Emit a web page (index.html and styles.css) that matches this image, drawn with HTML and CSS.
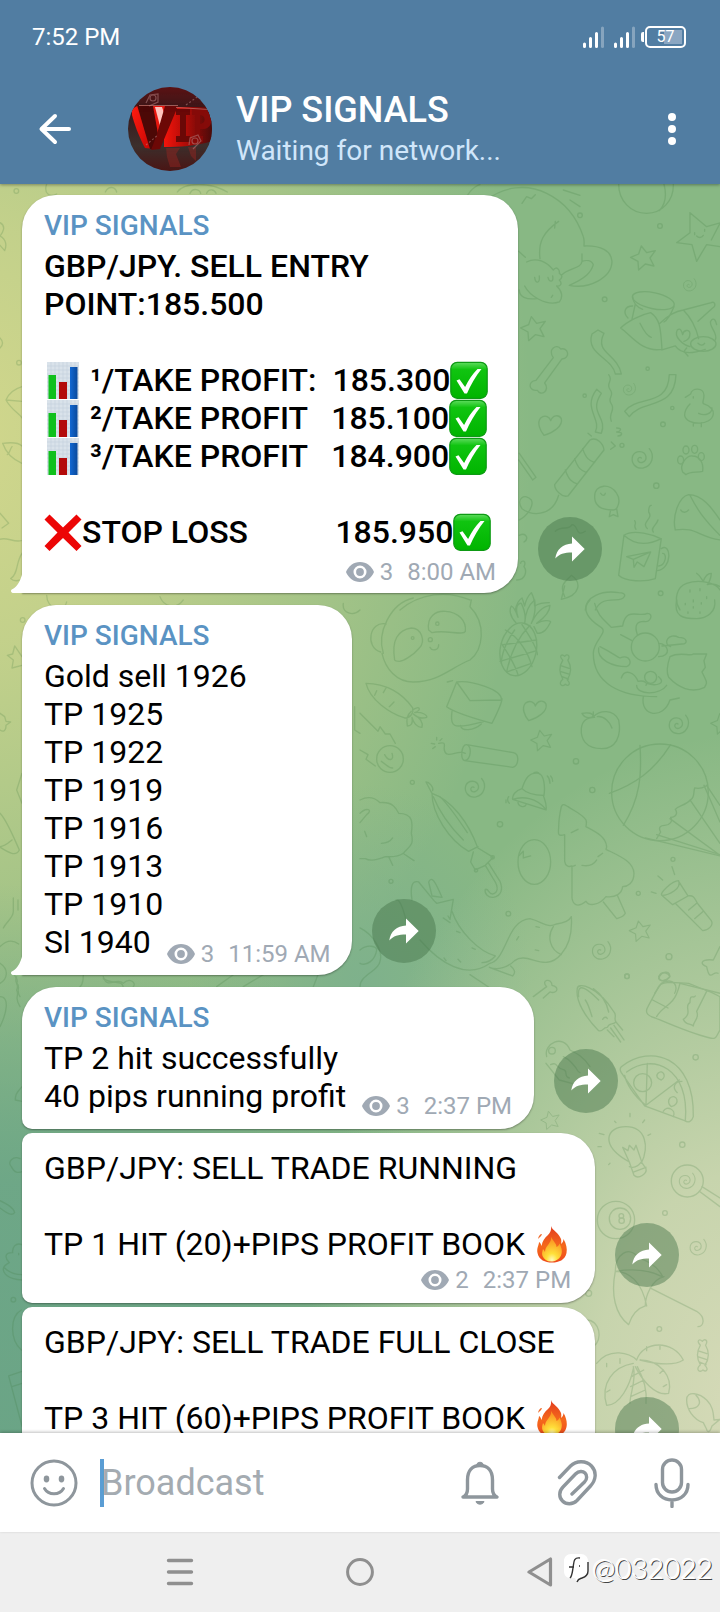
FILE: index.html
```html
<!DOCTYPE html>
<html lang="en">
<head>
<meta charset="utf-8">
<meta name="viewport" content="width=device-width, initial-scale=1">
<title>VIP SIGNALS</title>
<link rel="stylesheet" href="styles.css">
</head>
<body>
<svg class="defs" aria-hidden="true">
  <defs>
    <linearGradient id="g-check" x1="0" y1="0" x2="0" y2="1"><stop offset="0" stop-color="#5fdc5f"/><stop offset=".2" stop-color="#10c410"/><stop offset="1" stop-color="#00b400"/></linearGradient>
    <linearGradient id="g-fire" x1="0" y1="0" x2="0" y2="1"><stop offset="0" stop-color="#e23b1e"/><stop offset=".55" stop-color="#f5691c"/><stop offset="1" stop-color="#ee4a1c"/></linearGradient>
    <radialGradient id="g-flame" cx=".5" cy=".95" r=".8"><stop offset="0" stop-color="#fffbc0"/><stop offset=".35" stop-color="#ffe03a"/><stop offset="1" stop-color="#fb9a24"/></radialGradient>
    <linearGradient id="g-blue" x1="0" y1="0" x2="1" y2="0"><stop offset="0" stop-color="#1268d2"/><stop offset="1" stop-color="#0a4a9c"/></linearGradient>
    <symbol id="e-chart" viewBox="0 0 38 38">
      <path d="M3 1h32v37H3z" fill="#d9e2ea"/>
      <path d="M3 5h32M3 9h32M3 13h32M3 17h32M3 21h32M3 25h32M3 29h32M3 33h32M7 1v37M11 1v37M15 1v37M19 1v37M23 1v37M27 1v37M31 1v37" stroke="#c5d1dc" stroke-width=".6"/>
      <path d="M4.500 14h7.500v24H4.500z" fill="#0fc01c"/><path d="M15 21h8v17h-8z" fill="#b30a0a"/><path d="M26 6h7.500v32H26z" fill="url(#g-blue)"/>
    </symbol>
    <symbol id="e-check" viewBox="0 0 38 38">
      <rect x=".8" y="1.300" width="36.400" height="36" rx="6.500" fill="url(#g-check)" stroke="#0e9a14" stroke-width="1.200"/>
      <path d="M6.500 19.500l3-1.200 5.600 7.600C18.500 19 22.500 13 27.500 8h4C25.500 15.500 20.500 24 17 32.500h-2.500z" fill="#fff"/>
    </symbol>
    <symbol id="e-cross" viewBox="0 0 38 38"><path d="M5.500 1.500L19 14.500 32.500 1.500l5 5L24.500 19.500 37.500 33l-5 5L19 25 5.500 38l-5-5L13.500 19.500.5 6.500z" fill="#ec0606"/></symbol>
    <symbol id="e-fire" viewBox="0 0 38 38">
      <path d="M18 1c1 4 8 7 10 13 .5 2 .3 4 0 5 1.500-1 2.500-3 2.500-5 3 5 3.800 10 3 14C32 35 26 37.500 19 37.500S6 35 4.500 28C3.500 23 6 20 6 17c1.500 1 2 2.500 2.500 4 1-5 3-8 6.500-11 2.500-2.500 3.500-5 3-9z" fill="url(#g-fire)"/>
      <path d="M5 14c1.500-1.500 3.500-3 4-5-2 0-3.500 2-4 5z" fill="#ef6a2a"/>
      <path d="M18.500 12c1 4 5 6 5 10 2-1 2.500-2 3-3.500 2.500 5 3 8 1.500 12-2 4-6 6-10 6s-7-2-8.500-5.500c-1-3 0-5 .5-7 1 1 1.500 2 2 3 0-6 6-8 6.500-15z" fill="url(#g-flame)"/>
    </symbol>
    <symbol id="i-share" viewBox="0 0 30 26"><path d="M17 .5v7C8 8 1.500 13 .3 22.500c4-4.500 9-6 16.700-6v9L29.700 13z" fill="#fff"/></symbol>
    <symbol id="i-eye" viewBox="0 0 28 20"><path d="M14 0C7.500 0 2.500 4 0 10c2.500 6 7.500 10 14 10s11.500-4 14-10C25.500 4 20.500 0 14 0z" fill="#a0a9b4"/><circle cx="14" cy="10" r="5.200" fill="none" stroke="#fff" stroke-width="2.600"/></symbol>
    <symbol id="i-tail" viewBox="0 0 12 24"><path d="M12 0C11 9 7 18 .8 20.500c-1.500 1-.8 3 1 3.500H12z" fill="#fff"/></symbol>
    <symbol id="i-signal" viewBox="0 0 21 22"><g stroke="#fff" stroke-width="3" stroke-linecap="round"><path d="M1.500 18v2.500M7.500 12.500v8M13.500 7.500v13"/><path d="M19.500 2v18.500" opacity=".3"/></g></symbol>
    <symbol id="d-star" viewBox="-40 -40 80 80" overflow="visible"><path d="M-8-34L8-14l26-6-16 22 12 24-26-6-20 18-2-26-22-12 24-10z"/></symbol>
    <symbol id="d-spiral" viewBox="-40 -40 80 80" overflow="visible"><path d="M22-30C40-8 30 22 4 28-20 32-34 12-28-8-20-26 8-26 12-6 14 10-6 18-12 6c-2-8 6-12 10-8"/></symbol>
    <symbol id="d-heart" viewBox="-40 -40 80 80" overflow="visible"><path d="M-18 32C-30 18-40-6-28-20-14-32 0-22 2-12 8-28 26-32 34-18c6 22-24 42-52 50z"/></symbol>
    <symbol id="d-candy" viewBox="-40 -60 80 120" overflow="visible"><path d="M-8-32c-14-16-2-20 6-12 6-10 20-4 10 12 12 20 12 40-2 62 14 14 2 22-6 14-8 10-26 0-8-16-12-20-12-40 0-60zM-12-14l24 8M-14 4l26 8M-10 20l20 8"/></symbol>
    <symbol id="d-bone" viewBox="-60 -75 120 150" overflow="visible"><path d="M14-36c-18-24 10-44 22-26 24-6 30 28 4 30L-12 40c18 22-12 42-22 22-26 4-30-28-4-30z"/></symbol>
  </defs>
</svg>

<div class="screen">
  <header class="top">
    <div class="status">
      <time>7:52 PM</time>
      <div class="status-icons">
        <svg class="signal"><use href="#i-signal"/></svg>
        <svg class="signal"><use href="#i-signal"/></svg>
        <div class="battery">57</div>
      </div>
    </div>
    <div class="toolbar">
      <button class="icon-button back" aria-label="Back"><svg width="34" height="32" viewBox="0 0 34 32"><path d="M31 16H4M17 3L3.500 16 17 29" fill="none" stroke="#fff" stroke-width="4" stroke-linecap="round" stroke-linejoin="round"/></svg></button>
      <svg class="avatar" viewBox="0 0 84 84" role="img" aria-label="Channel photo">
        <defs>
          <linearGradient id="av-bg" x1="0" y1="0" x2="0" y2="1"><stop offset="0" stop-color="#5a1113"/><stop offset=".3" stop-color="#38191b"/><stop offset=".7" stop-color="#3c2f2c"/><stop offset="1" stop-color="#4a1514"/></linearGradient>
          <linearGradient id="av-red" x1="0" y1="0" x2="1" y2="1"><stop offset="0" stop-color="#ff1c10"/><stop offset="1" stop-color="#c40604"/></linearGradient>
          <linearGradient id="av-block" x1="0" y1="0" x2="1" y2="0"><stop offset="0" stop-color="#f4150c"/><stop offset=".45" stop-color="#b00c08"/><stop offset="1" stop-color="#4a0b0a"/></linearGradient>
          <clipPath id="av-clip"><circle cx="42" cy="42" r="42"/></clipPath>
        </defs>
        <g clip-path="url(#av-clip)">
          <path d="M0 0h84v84H0z" fill="url(#av-bg)"/>
          <path d="M36 20h48v34c-14 5-34 6-48 6z" fill="url(#av-block)"/>
          <path d="M4 22L11 18 26 62l-9-1C11 50 6 36 4 28z" fill="url(#av-red)"/>
          <path d="M9 18h16l6 28-6 16h-3z" fill="#4c0807"/>
          <path d="M25 19h13l-5 30-3-2z" fill="#e8170f"/>
          <path d="M27 20h7l3 9-5 10z" fill="#ffc4bd"/>
          <path d="M37 19h13L32 62l-9 1 6-16z" fill="#6c0807"/>
          <path d="M48 22h14v6h-4v21h4v6H48v-6h4V28h-4z" fill="#6a0807"/>
          <path d="M64 22h11c10 0 12 19 1 20h-4v7h3v6H64v-6h3V28h-3zm8 6v9c6 0 6-9 0-9z" fill="#850b09" fill-rule="evenodd"/>
          <path d="M11 18.500h39M48 20.500l34 2" stroke="#d98a84" stroke-width="1" opacity=".6"/>
          <path d="M38 61h14l-4 6 5 13H42l-3-10zM60 60h8v14l-5-5z" fill="#9a2622" opacity=".45"/>
          <g fill="none" stroke="#b98585" stroke-width="1.200" opacity=".5"><path d="M18 16l4-8 8-1v8l-9 4M61 58l1-7 8-3 3 6-8 8"/><circle cx="25" cy="11" r="3"/><circle cx="67" cy="54" r="3"/><path d="M58 18l14-10M18 58l12-10" stroke-dasharray="2 2"/></g>
        </g>
      </svg>
      <div class="heading">
        <h1>VIP SIGNALS</h1>
        <p>Waiting for network...</p>
      </div>
      <button class="icon-button more" aria-label="More options"><svg width="8" height="32" viewBox="0 0 8 32" fill="#fff"><circle cx="4" cy="4" r="4"/><circle cx="4" cy="16" r="4"/><circle cx="4" cy="28" r="4"/></svg></button>
    </div>
  </header>

  <main class="chat">
    <svg class="doodles" viewBox="0 184 720 1249" preserveAspectRatio="xMidYMin slice" aria-hidden="true">
      <g transform="translate(360 180) scale(.3333)">
        <path d="M310 80c6-36 30-60 50-66M380 60c50-40 120-50 180-20 50 24 90 70 110 130 4 10 2 20 2 28M540 236c-6-50 10-80 56-112M586 124l-2 20M672 198c50-2 82 14 84 46 0 50-70 84-128 72 50-22 66-40 72-62-6-14-22-14-34-10-2 22-40 20-60 40M666 222v20M476 214l20 18M500 246c30-16 60 0 80 24 10-14 20 0 18 10 12 6 8 16 0 20 10 10 4 20-8 18 16 14 20 34 8 48-40 14-90-20-104-48M478 330c0 20 20 30 52 26M524 292c2 20 16 20 14-4M564 292c4 16 18 16 14-4M578 346l-4 6M486 70l14-20 14 6 12-12M610 30l50 16M630 60l30 20"/>
        <path d="M776 12c0 50 36 88 84 88 46 0 82-38 80-88M912 12c10 40 0 66-14 80"/>
        <path d="M990 98l50 42 50-14M990 98v60l-40 30 46 6 14 50 30-50 40 6M1080 130l-26 50M1004 158v6M1034 148v6M1010 168c8 8 16 4 20-2"/>
        <ellipse cx="880" cy="362" rx="64" ry="24" transform="rotate(12 880 362)"/><path d="M818 350c2 20 10 30 30 38M942 380c-10 24-20 40-30 46M818 378c-24 0-30 20-14 36M826 372l-10 46M782 444c20-20 60-40 90-46 30 20 30 50 34 110-60 10-90-40-124-64zM840 430c10 20 24 40 34 42M900 430c20-20 40-36 70-40l84-22c10-6 16 10 4 16l-44 40M970 390c30 30 40 60 46 86M906 510l40-12c20 30 60 20 90 10"/>
        <ellipse cx="1030" cy="492" rx="38" ry="22"/><path d="M990 500c-20-4-50-30-38-50 10-8 14 6 16 14 2-14 20-18 22-4 0 14-8 22-18 24M1066 480c10-20-20-40-14-56 10-16 16 0 18 10M980 504l-8 10 12 14M1014 490c8 8 16 6 20 0"/>
        <path d="M714 450l18 10c-30 60 40 60 52 122h-18c-10-50-90-60-70-120zM928 584h20c-4 110-100 70-140 126l-14-16c40-50 130-10 134-110zM710 628l14 12c-40 60 20 70 0 120l-18-4c20-40-40-70 4-128zM746 584c16 20-10 24 4 44 16 20-10 24 4 44 14 20-10 24 0 52"/>
        <path d="M976 652l16-10c4-20 40-20 40 4 0 18-8 22 0 26 20 6 30 20 28 30-4 36-80 36-86 4 0-16 8-26 16-34M1000 650v4M1016 700c20 10 40 0 40-16M1000 728v10M1024 728v12"/>
        <path d="M690 780c20-10 40 10 42 30L624 948c-20 6-40-20-40-34zM668 806c10 30 20 36 36 42M644 836c10 30 20 36 36 42M616 870c10 30 20 36 36 42M596 946c-20 70-90 60-110 40-20-30 10-48 28-26 10 20-16 50-36 60M684 760l10 8M770 744c20 0 10 12 0 12 24 0 14 12 4 12M754 786l12 12-14 10M478 820l50 72-10 8-42-60"/>
        <path d="M968 876c-10-20 10-50 30-48 20 0 34 20 30 46-20 4-40 0-50 10z"/><ellipse cx="962" cy="840" rx="9" ry="12"/><ellipse cx="978" cy="810" rx="9" ry="12"/><ellipse cx="1004" cy="808" rx="9" ry="12"/><ellipse cx="1024" cy="830" rx="9" ry="12"/>
        <path d="M704 950c0-40 50-40 66-10 14 20 4 50-10 50-30 0-56-10-56-40zM722 940c4 8 12 8 14 0M752 990l-4 20 12-6 14 6-4-24"/>
        <path d="M946 1050c-10-40 10-100 40-106 40 0 70 40 94 76M990 946c20 40 40 70 90 120M946 1050c60-10 70 20 134 30M962 990c6 10 18 8 24 0"/>
        <path d="M792 1066l-16 120c20 20 80 20 110 10l18-120c-40 20-80 20-112-10zM792 1066c30-20 90 0 110 10M904 1106c30-20 34 60-12 66M908 1120c14 0 10 36-12 38M800 1130l72-14-20 44-20-14-10 16-2-24zM820 1138l52-22M828 1048c-10-14 4-14-4-26M862 1046c-20-20 20-30 4-50 0-16 4-20 8-20M880 1056c-10-12 10-20 14-36"/>
        <path d="M1010 1180c10 6 16 20 20 24 8-24 20-24 24-24 0 14-8 30-12 34 20-6 30 0 38 6M960 1290c-20-30-10-70 20-80 40-14 90 0 100 20M990 1230v6M1020 1226v6M1000 1260v6M1040 1250v6"/>
        <path d="M466 1290c4-20 10-30 20-36 4 10 6 18 8 24 4-20 10-30 20-40 8 14 10 30 10 40 10-6 20-10 44-10M676 1290c0-40 50-60 100-52 30 0 20 22-10 22-40 0-50 10-60 30M614 1250c-20-40 10-50 20-64 30 20 30 60-30 72l10-40M120 1290c60-50 140-60 210-30M586 1054c20-20 40 0 50-20 20 0 10 40 40 20M478 1066c20-10 30 10 14 20M470 1200c30 0 30-30 22-40 10-20-10-20-10-10"/>
        <use href="#d-star" x="812" y="192" width="80" height="80"/><use href="#d-star" x="482" y="404" width="80" height="80"/><use href="#d-heart" x="530" y="694" width="80" height="80"/><use href="#d-spiral" x="806" y="796" width="80" height="80"/><use href="#d-spiral" x="964" y="290" width="50" height="50"/><use href="#d-spiral" x="784" y="604" width="48" height="48"/><use href="#d-bone" x="506" y="494" width="120" height="150"/>
        <circle cx="660" cy="106" r="7"/><circle cx="900" cy="138" r="7"/><circle cx="734" cy="358" r="7"/><circle cx="863" cy="566" r="5"/><circle cx="937" cy="684" r="5"/><circle cx="909" cy="733" r="7"/><circle cx="786" cy="796" r="6"/><circle cx="889" cy="917" r="8"/><circle cx="674" cy="647" r="5"/><circle cx="902" cy="1240" r="7"/>
      </g>
      <g transform="translate(360 600) scale(.3333)">
        <path d="M70 160c-20-60 20-150 90-166M330 20c50 50 40 130 0 160-60 24-90 64-170 66-50 0-84-40-94-86M78 72c-50-10-64 70-16 84M104 180c-10-60 10-90 50-96 30 0 44 40 24 60-20 24-50 40-60 40-8 0-12 0-14-4zM206 90c-6-40 20-58 50-56 40 2 64 30 60 60-8 14-60-6-100 4zM210 142c6 12 26 10 26-8M330 20l4-20"/><circle cx="158" cy="114" r="4"/><circle cx="232" cy="71" r="5"/><circle cx="211" cy="119" r="6"/>
        <ellipse cx="475" cy="148" rx="54" ry="80" transform="rotate(12 475 148)"/><path d="M436 90c40 20 70 70 80 110M486 74c20 30 46 70 46 90M424 130c20 30 40 60 50 94M430 134l100-14M420 184l110-32M440 216l70-24M510 76c-40 40-60 90-70 140M464 90c-30 40-40 80-40 100M468 68c-20-20-20-40-14-50 12 6 16 24 20 34-10-30 0-44 10-42 10 20 14 40 10 60 2-30 10-54 30-70 4 30 0 50-10 70 14-30 30-50 56-54 0 20-20 40-40 54 20-10 40-10 42-4-10 20-20 34-40 34l-10-20"/>
        <path d="M18 250c60 0 110 30 140 74 4 16-8 30-24 30C90 340 30 300 18 250zM44 286l6-14M70 278l8-14M88 320l14-14M158 330c20-16 30 0 6 8 20-4 40 8 36 14-20 6-34-4-40-10 20 10 30 26 26 40-16 0-26-16-30-30 4 20-4 26-14 26-4-20 0-34 12-44"/>
        <path d="M290 246l40 56 94-2c4-30-90-60-134-54zM290 246l-30 74c20 16 100 40 136 50 10-20 30-60 30-74M276 334c-4 30 0 44 20 44 34 0 60-10 76-14M302 376c0 20 40 16 62-4M262 246l16-4"/>
        <path d="M690 0c-30 30 0 60 30 80 30 16-20 40-20 80 0 90 80 130 190 130M704 10c10 40 30 50 50 72l34-4c10-60 50-24 74-38 20 0 10 30-10 24-20 0-30 10-20 40M782 104l34 18M720 140c40 20 50 30 60 34 30-14 40 20 20 26-40 0-90-20-84-56M784 234c10-30 40-16 50 10 20-4 30 6 24 12M850 290c-10 60 60 70 80 10l28-6M896 130c30 0 40 40 0 40M906 138l60-6c20 0 16-20-10-20-30-16-50 20-24 28M930 170c30-16 60 0 70-8h40l-8 20 4 20-10 14c20 40 14 30 8 46-40 20-80 0-108-30-10-20 0-50 4-62M860 250c30 10 60 0 36-20M830 256c0 30 70 30 90 0"/><circle cx="856" cy="141" r="42"/><circle cx="872" cy="232" r="18"/>
        <path d="M950 0c-10 50 20 56 60 56 30 0 60-20 54-56M976 10v4M1000 20v4M1024 8v4M984 36v4M1020 36v4"/>
        <path d="M700 350c20-20 60-24 76 10 10 50-10 86-50 86-50 0-64-30-62-60 2-26 20-34 40-34M700 350c-16 6-26 4-34-10 20-4 34 0 34 10v-14M712 350c20-4 40 20 44 34"/>
        <path d="M320 434l140 24c20 4 16 40-2 44l-144-20c-14-4-10-50 6-48zM320 434c16 6 14 44-6 48M316 460c-20-10-40 8-56 2-20-14 10-40-24-32M230 412v8M214 430l10 2M218 446l8-6M246 416l-6 6"/>
        <path d="M486 566c10-30 20-50 50-46 16 4 20 40 16 66M520 520c8-6 16-4 18 2M486 566c-20 6-30 20-28 32l100 32c4-14-4-30-8-44-30 0-50-6-64-20zM458 598c30-10 70-6 100 30M474 606c0 14 20 18 24 8M562 528c6 6 8 14 8 22M572 528c6 6 6 10 6 16M446 590c-4 6-4 14 2 20M438 600v8"/>
        <circle cx="900" cy="577" r="145"/><path d="M840 436c6 90 0 160-50 240M932 434c-50 80-110 120-184 146M890 716l12-20c-8-14 0-20 12-20 14 0 26-12 18-24 20 0 20-16 14-24 10-12 30-10 48-30 10-8 6-20 10-34 14 4 24 0 34-6M990 600l90 130M930 656l150 110M890 704l190 60M856 714l224 54M1032 556l48 110M1040 556l40 60"/>
        <path d="M198 546l18 34c60 20 110 90 136 160M198 546c10 0 24 16 20 26M216 580c0 60 50 140 110 174l28-14M220 590c20 50 50 90 90 130M240 590c20 20 50 60 82 108M354 744l46 28-24 24-30 14-14-24 8-30M376 796l26 44c16 24 10 40-4 42-14 0-10-16-22-14-4 14 10 26 24 24 24-4 30-24 20-48l-34-54"/><circle cx="398" cy="772" r="5"/><circle cx="348" cy="811" r="5"/>
        <ellipse cx="523" cy="786" rx="49" ry="67"/><path d="M478 766l12-12v20l22-6"/>
        <path d="M604 620c4-10 10-6 20 0 20 14 40 20 54 40 4 10 0 14 0 20 30 16 60 30 62 60 0 4-2 6-2 8 40 20 82 36 84 72 0 30-20 40-34 40-2 20-20 34-50 30-20 26-50 30-60 14-30 24-40 4-42-10v-96c-10 4-20 0-22-14v-80c-20 6-20-2-18-20 0-24 4-46 8-64zM634 698l20-10M666 796c30 6 40-10 44-16M714 770l14-10M636 800l10-4M730 906l40 50c10-4 20-4 26-16l-24-54"/>
        <path d="M906 886c20 0 60-20 50-44-20 0-60 40-50 44zM956 844l28 44-46 26-30-26M984 888c20-4 20 10 30 24l40 50c8 14-10 30-26 30l-80-80M1010 910l-24 20M1030 934l-26 22M936 800l8 24M894 828l14 12M874 876l14 4"/>
        <path d="M0 600c40-20 60 10 60 8 40-4 50 20 56 32 50 0 40 40 38 60 10 40-10 40-24 60-20 14-40 10-54 10-24 10-46 14-60 6H0M0 640c20-20 40-10 20 4L0 668M64 730c20 0 30-10 34-16M86 770l12 26M132 762l30 20M14 694l6 16M0 340l54 54 6-14 16 22 14 0 16 28M0 450l24 14-6 14 28 20"/><circle cx="90" cy="477" r="40"/><path d="M74 464c10 20 30 20 22-4M64 484c16 10 20 20 34 20"/>
        <path d="M156 900c-6-40 0-60 20-54l46 56 8 8 50-12-10 60-6-10M206 846c10-20 20 0 40 46l-30-4zM276 934c20 60 80 120 130 134-12 14-26 20-40 20M270 968l-20-14M390 1090c50-10 50-130 120-134 40 10 50 30 80 16 30-4 40-14 44-22 4 60-10 90-30 112-50 60-100-10-140 20-20 20-50 30-76 20l70 26c10-10 6-20-6-30M330 1124l60 40M180 1020c60 70 140 120 210 70M580 980c-20 30-10 70 24 84M290 994l10 4M336 1044l10 4M252 1074l6 8M294 1078l8 8M470 1020l6-10M528 980l10 2M526 1050l10 2M108 900c10-4 20 20 30 60M0 984c40 20 70 70 60 100-4 30-60 40-60 76M0 1050c24-20 50-10 50 0-4 30-30 50-50 40"/>
        <path d="M1080 1040l-20 40c-40-4-40 14-20 20 10 50 20 10 34 20M896 1130c10-20 30-10 34 0-10 14-30 20-34 0zM884 1180l20-30c40-20 50 10 40 30M960 1150l120 30M656 1190c-6-50 30-20 60 10M520 1190l40-30c-20-20 16-28 16-4 24 4 16 28-6 20l-20 18"/>
        <use href="#d-heart" x="484" y="290" width="80" height="80"/><use href="#d-star" x="512" y="386" width="68" height="68"/><use href="#d-star" x="808" y="958" width="68" height="68"/><use href="#d-spiral" x="918" y="336" width="76" height="76"/><use href="#d-spiral" x="306" y="526" width="76" height="76"/><use href="#d-spiral" x="688" y="1016" width="72" height="72"/><use href="#d-candy" x="578" y="152" width="76" height="118"/><use href="#d-star" x="1052" y="336" width="68" height="68"/>
        <circle cx="648" cy="484" r="8"/><circle cx="697" cy="570" r="8"/><circle cx="157" cy="547" r="6"/><circle cx="420" cy="673" r="8"/><circle cx="939" cy="778" r="6"/><circle cx="835" cy="880" r="6"/><circle cx="93" cy="844" r="6"/><circle cx="445" cy="941" r="7"/><circle cx="927" cy="1070" r="9"/><circle cx="801" cy="1129" r="7"/>
      </g>
      <g transform="translate(360 970) scale(.3333)">
        <path d="M652 56c0-20 60-10 110 70 10 10-2 20 6 30-10 10-20 0-26 16-16 0-10 14-26 10-40-40-70-90-64-126zM676 90c10 14 14 30 20 50M700 56c20 14 40 40 46 70M768 156l20 24M762 166l30 44M752 174l30 42M742 180l20 20M728 148c4-8 12-8 14-2"/>
        <path d="M896 50c10-20 60-10 90-10l50 20c24 6 40 20 44 20v100c-10 16-10 30-30 24-60-14-140-50-164-60-20-6-34-14-22-34zM960 40c-10 40-20 50-30 60s-30 20-40 40M878 90l46 24M1040 64l-30 60c10 20-10 30-10 44-10-10-20 0-30-20 30-20 0-40 20-50 0-30 10-10 16-20"/><path d="M896 26c10-30 40-20 32-4-10 10-26 14-32 4z"/>
        <path d="M560 260c-10-40 50-70 70-20 20 10 40 20 60 50M558 280l40 50 60 16M572 284c20-10 16 10 36 14s0 20 20 26M610 260c20 10 16 10 30 24s10 20 20 24"/><circle cx="576" cy="242" r="10"/>
        <path d="M784 290c90-70 220-30 216 150-4 14-14 20-26 12l-120-44-70-100c-6-10-4-14 0-18zM800 306c80-60 190-10 176 146M862 280l-4 126 100-76M858 406c-40-30-60-70-64-90"/><circle cx="848" cy="338" r="27"/><path d="M894 310c14-14 28 10 10 20-14-4-16-14-10-20zM930 384c20-16 34 20 4 26-10-6-10-20-4-26zM910 424c10-20 40-4 30 16M966 334c-24 0-30 20-14 34"/>
        <path d="M808 576c-90-50-70-106-10-106 60 0 70 60 46 110M808 576l14 40c14 14 40-6 36-20l-14-20c-10 14-20 20-36 14M822 606l36-14M808 576l-20-44 16 10 4-16 14 14 6-14 16 46M718 490l14 4M714 530h10M750 580l-4 4M764 454l4 4M810 430v10M854 450l-6 8M872 492l-8 4"/>
        <circle cx="982" cy="633" r="48"/><use href="#d-spiral" x="950" y="602" width="62" height="62"/><path d="M1026 650l54 34M1018 664l62 46"/>
        <circle cx="768" cy="750" r="56"/><circle cx="780" cy="746" r="32"/><circle cx="784" cy="738" r="7"/><circle cx="785" cy="752" r="8"/>
        <path d="M766 904c0-50 40-80 70-40 30 10 60 30 72 56M766 904c-14 70 0 130 40 160 10-30 30-50 50-56 0-30 20-80 56-88M766 904c40 0 80 30 94 104M766 904c60-10 110 0 140 16M870 954l140 70c30 20 20 46 4 46"/>
        <use href="#d-star" x="542" y="420" width="60" height="60"/><use href="#d-spiral" x="982" y="800" width="64" height="64"/>
        <circle cx="801" cy="19" r="7"/><circle cx="1007" cy="262" r="8"/><circle cx="967" cy="524" r="8"/><circle cx="915" cy="729" r="7"/><circle cx="686" cy="970" r="9"/>
      </g>
      <g transform="translate(360 1300) scale(.3333)">
        <path d="M710 190c40-50 100-30 120-10 20-60 110-60 140 0-30 20-90 10-130 0 60 0 100 50 86 100-40 10-80-40-100-80M820 190c-60 10-100 60-80 126 40 0 70-60 80-110M820 200c10 40-10 80-10 110M832 200c20 40 30 70 26 110M815 230l36-20M812 260l40-20M812 290l44-20M740 190v10M780 176v14M860 140v12M900 136v12M900 220l10-10M910 260l10-6M750 270l-10 6"/>
        <path d="M980 300c0-30 40-20 60 0 20 20 20 40 22 60l18-2-24 20c-6 20-14 20-16 10l-10-20c-30-10-50-40-50-68zM1008 286c20 20 10 40-20 40"/>
        <use href="#d-candy" x="990" y="108" width="78" height="118"/><circle cx="898" cy="87" r="7"/><path d="M680 60c40 0 50 60 20 80"/>
      </g>
      <g transform="translate(0 180) scale(.3333)">
        <circle cx="49" cy="33" r="7"/><path d="M140 12c-10 30 10 40 30 30M316 36c10-20 30-16 34 0M532 36c20-30 100-30 150 0M570 40c10-20 30-10 32 0M620 40c6-16 24-12 28 0M0 128c20 10 8 30 0 40 20 10 20 30 14 44L0 196M66 620c-20 6-40 20-48 40 16 30 40 40 48 54M18 660l48 4M8 790c30-4 50 0 58 8M8 790c10 30 34 50 58 60M36 800c-8 10-6 20-14 24M0 474c10 10 10 20 0 30M0 1000l26 30-20 14M0 1078c20-8 40 10 64 4M66 1120c-20 30-10 60-34 76 10 10 24 6 30 4M140 1246c0 40 50 60 60 20M480 1250c10 30 50 40 70 10"/><circle cx="57" cy="548" r="7"/>
      </g>
      <g transform="translate(0 600) scale(.3333)">
        <path d="M66 170l-22-32-6 24-16 4 18 14-4 24 30-8M0 340l14 10 4 14 14 2-14 10c0 20-10 20-18 14M66 520l-16 50 16 40M0 640c20 20 40 70 58 110-10 20-30 10-60-10M0 740c14 0 24-10 36-20M40 894v40c0 20-20 30-30 50M54 900v30M0 1040c20-20 40-20 56-8M0 1090c30 20 20 50 0 60M50 1110c-20 20 10 20 0 40 14 10-4 20 10 40M310 1130c10 40 40 0 60 20 20-20 40 0 30 10M1030 10c-4 30 30 40 50 20M1064 320v70l16 10"/><circle cx="68" cy="60" r="7"/>
      </g>
      <g transform="translate(0 970) scale(.3333)">
        <path d="M50 20c-10 20 10 20 0 40 10 20-10 20 10 50M250 14c0 30-8 40-20 40M0 80c30 0 20 50 0 90M66 350c-20 20-20 30-20 40l20 4M60 566c-20-10-40 10-26 24 10 20 20 20 34 14M0 692c20 10 40 20 44 36-8 10-20 4-44-14M66 824c-20-8-30 10-28 24-30 0-20 20-10 30-20 10-20 20-16 28 10 20 40 24 54 24M14 894c20 20 40 20 52 20M56 850v4M310 26c30 20 60 0 60 30M650 50l50-36M730 50l60-36M940 50l14-36"/><circle cx="40" cy="989" r="7"/><path d="M64 1020c-36 20-34 90 0 120M66 1204l-40 14 40 150M36 1250l30-10"/>
      </g>
    </svg>

    <article class="message tailed">
      <div class="bubble wide">
        <svg class="tail" aria-hidden="true"><use href="#i-tail"/></svg>
        <h2>VIP SIGNALS</h2>
        <p class="text strong">GBP/JPY. SELL ENTRY
POINT:185.500

<svg class="emoji" role="img" aria-label="bar chart"><use href="#e-chart"/></svg> ¹/TAKE PROFIT:  185.300<svg class="emoji" role="img" aria-label="check"><use href="#e-check"/></svg>
<svg class="emoji" role="img" aria-label="bar chart"><use href="#e-chart"/></svg> ²/TAKE PROFIT   185.100<svg class="emoji" role="img" aria-label="check"><use href="#e-check"/></svg>
<svg class="emoji" role="img" aria-label="bar chart"><use href="#e-chart"/></svg> ³/TAKE PROFIT   184.900<svg class="emoji" role="img" aria-label="check"><use href="#e-check"/></svg>

<svg class="emoji" role="img" aria-label="cross"><use href="#e-cross"/></svg>STOP LOSS           185.950<svg class="emoji" role="img" aria-label="check"><use href="#e-check"/></svg></p>
        <footer class="meta"><svg class="eye" aria-label="Views"><use href="#i-eye"/></svg><span>3</span><time>8:00 AM</time></footer>
      </div>
      <button class="share" aria-label="Share"><svg><use href="#i-share"/></svg></button>
    </article>

    <article class="message tailed">
      <div class="bubble">
        <svg class="tail" aria-hidden="true"><use href="#i-tail"/></svg>
        <h2>VIP SIGNALS</h2>
        <p class="text">Gold sell 1926
TP 1925
TP 1922
TP 1919
TP 1916
TP 1913
TP 1910</p>
        <div class="row">
          <p class="text">Sl 1940</p>
          <footer class="meta"><svg class="eye" aria-label="Views"><use href="#i-eye"/></svg><span>3</span><time>11:59 AM</time></footer>
        </div>
      </div>
      <button class="share" aria-label="Share"><svg><use href="#i-share"/></svg></button>
    </article>

    <article class="message first">
      <div class="bubble">
        <h2>VIP SIGNALS</h2>
        <p class="text">TP 2 hit successfully</p>
        <div class="row">
          <p class="text">40 pips running profit</p>
          <footer class="meta"><svg class="eye" aria-label="Views"><use href="#i-eye"/></svg><span>3</span><time>2:37 PM</time></footer>
        </div>
      </div>
      <button class="share" aria-label="Share"><svg><use href="#i-share"/></svg></button>
    </article>

    <article class="message grouped">
      <div class="bubble">
        <p class="text">GBP/JPY: SELL TRADE RUNNING

TP 1 HIT (20)+PIPS PROFIT BOOK <svg class="emoji" role="img" aria-label="fire"><use href="#e-fire"/></svg></p>
        <footer class="meta"><svg class="eye" aria-label="Views"><use href="#i-eye"/></svg><span>2</span><time>2:37 PM</time></footer>
      </div>
      <button class="share" aria-label="Share"><svg><use href="#i-share"/></svg></button>
    </article>

    <article class="message grouped">
      <div class="bubble">
        <p class="text">GBP/JPY: SELL TRADE FULL CLOSE

TP 3 HIT (60)+PIPS PROFIT BOOK <svg class="emoji" role="img" aria-label="fire"><use href="#e-fire"/></svg></p>
        <footer class="meta"></footer>
      </div>
      <button class="share" aria-label="Share"><svg><use href="#i-share"/></svg></button>
    </article>
  </main>

  <form class="composer">
    <button type="button" class="icon-button" aria-label="Emoji"><svg width="48" height="48" viewBox="0 0 48 48" fill="none" stroke="#8e969c" stroke-width="3" stroke-linecap="round"><circle cx="24" cy="24" r="22"/><path d="M14.500 29.500c4 7 15 7 19 0"/><g fill="#8e969c" stroke="none"><ellipse cx="16.500" cy="20" rx="2.800" ry="3.400"/><ellipse cx="31.500" cy="20" rx="2.800" ry="3.400"/></g></svg></button>
    <span class="caret"></span>
    <input type="text" placeholder="Broadcast" aria-label="Broadcast">
    <button type="button" class="icon-button" aria-label="Notifications"><svg width="40" height="48" viewBox="0 0 40 48" fill="none" stroke="#8e969c" stroke-width="3.400"><path d="M3 38c3.500-1.500 4.500-4 4.500-8v-9C7.500 11 13 6.500 20 6.500S32.500 11 32.500 21v9c0 4 1 6.500 4.500 8z" stroke-linejoin="round"/><path d="M16.700 6.500a3.300 3.300 0 016.600 0zM16 42.500h8c-.5 3.500-7.500 3.500-8 0z" fill="#8e969c" stroke-width="1"/></svg></button>
    <button type="button" class="icon-button" aria-label="Attach"><svg width="40" height="48" viewBox="0 0 40 48" fill="none" stroke="#8e969c" stroke-width="3.400" stroke-linecap="round"><path d="M2.500 18.500L13.500 7C19 1.500 29 1 34.500 7s4.500 14-1 20L20 41.500c-4.500 4.500-11 4-14.500.5s-4-9.500.5-14L18.500 15c3.500-3.500 7.500-3 9.500-1s2.500 6-.5 9L15 35"/></svg></button>
    <button type="button" class="icon-button" aria-label="Record voice"><svg width="36" height="50" viewBox="0 0 36 50" fill="none" stroke="#8e969c" stroke-width="3.400" stroke-linecap="round"><rect x="8.500" y="2" width="19" height="32" rx="9.500"/><path d="M2 26.500C2 36 9 42 18 42s16-6 16-15.500M18 42v6.500"/></svg></button>
  </form>

  <nav class="system-nav">
    <button class="icon-button" aria-label="Recent apps"><svg width="28" height="28" viewBox="0 0 28 28" stroke="#8f8f8f" stroke-width="3.400" stroke-linecap="round"><path d="M2.500 2.500h23M2.500 14h23M2.500 25.500h23"/></svg></button>
    <button class="icon-button" aria-label="Home"><svg width="28" height="28" viewBox="0 0 28 28" fill="none" stroke="#8f8f8f" stroke-width="3"><circle cx="14" cy="14" r="12.400"/></svg></button>
    <button class="icon-button" aria-label="Back"><svg width="28" height="30" viewBox="0 0 28 30" fill="none" stroke="#8f8f8f" stroke-width="3.200" stroke-linejoin="round"><path d="M24.500 2v26L3 15z"/></svg></button>
    <div class="watermark">
      <svg width="26" height="30" viewBox="0 0 26 30"><path d="M8 1h10c4 0 7 3 7 7v10c0 4-3 6-6 7-3 1-4 1-5 4l-2-4H7c-4 0-6-3-6-7V8c0-4 3-7 7-7z" fill="#fff"/><path d="M17 5c-7-1-6 5-7 10-1 6-1 8-3 10M6 14h5M16 13h1M25 9v9c0 4-3 6-6 7-3 1-4 1-5 4" fill="none" stroke="#333" stroke-width="1.400"/></svg>
      <span>@032022</span>
    </div>
  </nav>
</div>
</body>
</html>
```
FILE: styles.css
```css
* { box-sizing: border-box; }

body {
  margin: 0;
  font-family: Roboto, "Liberation Sans", sans-serif;
  color: #000;
}

h1, h2, p { margin: 0; font-weight: 400; }

.defs { position: absolute; width: 0; height: 0; }

.screen {
  display: flex;
  flex-direction: column;
  height: 100vh;
}

.icon-button {
  display: flex;
  align-items: center;
  justify-content: center;
  flex: none;
  padding: 0;
  border: 0;
  background: none;
}

/* Header */
.top {
  position: relative;
  z-index: 1;
  flex: none;
  background: #517da2;
  color: #fff;
  box-shadow: 0 1px 3px rgba(0, 0, 0, .35);
}

.status {
  display: flex;
  align-items: center;
  justify-content: space-between;
  height: 73px;
  padding: 0 34px 0 32px;
  font-size: 24px;
}

.status-icons { display: flex; align-items: center; gap: 10px; }
.signal { width: 21px; height: 22px; }

.battery {
  position: relative;
  width: 41px;
  height: 22px;
  border: 2px solid #fff;
  border-radius: 5px;
  background: linear-gradient(#8aa6c2, #8aa6c2) 17px 2px / 18px 14px no-repeat;
  font-size: 16px;
  line-height: 18px;
  text-align: center;
}

.battery::before {
  content: "";
  position: absolute;
  left: -6px;
  top: 4px;
  width: 3px;
  height: 10px;
  border-radius: 2px 0 0 2px;
  background: #fff;
}

.toolbar {
  display: flex;
  align-items: center;
  height: 111px;
  padding: 0 44px 0 38px;
}

.avatar { flex: none; width: 84px; height: 84px; margin: 0 24px 0 56px; }
.heading { flex: 1; padding-top: 1px; }
.heading h1 { font-size: 36px; line-height: 42px; font-weight: 500; }
.heading p { margin-top: 2px; font-size: 28px; line-height: 36px; color: #d0e6fa; }

/* Conversation */
.chat {
  position: relative;
  flex: 1;
  min-height: 0;
  overflow: hidden;
  padding: 11px 22px 0;
  background:
    radial-gradient(ellipse 62% 54% at 104% 98%, #d6dab8 0%, rgba(210, 217, 180, .85) 35%, rgba(200, 212, 170, 0) 100%),
    radial-gradient(ellipse 70% 48% at 0% 104%, #6aa486 0%, rgba(107, 165, 135, .9) 50%, rgba(107, 165, 135, 0) 100%),
    radial-gradient(ellipse 24% 16% at 50% 64%, rgba(122, 174, 143, .7) 0%, rgba(122, 174, 143, 0) 100%),
    radial-gradient(ellipse 80% 58% at -6% 20%, #d2d78c 0%, rgba(205, 213, 140, .85) 30%, rgba(180, 204, 136, 0) 100%),
    #88b884;
}

.doodles {
  position: absolute;
  inset: 0;
  width: 100%;
  height: 100%;
  fill: none;
  stroke: #3c783c;
  stroke-width: 4;
  stroke-linecap: round;
  stroke-linejoin: round;
  opacity: .2;
}

.message {
  position: relative;
  display: flex;
  align-items: flex-end;
  gap: 20px;
  margin-bottom: 12px;
}

.message.first, .message.grouped { margin-bottom: 4px; }

.bubble {
  position: relative;
  padding: 13px 22px 9px;
  border-radius: 34px;
  background: #fff;
  box-shadow: 0 1px 2px rgba(0, 0, 0, .35);
}

.wide { min-width: 496px; }
.tailed .bubble { padding-bottom: 7px; border-bottom-left-radius: 0; }
.first .bubble { border-bottom-left-radius: 10px; }
.grouped .bubble { padding: 16px 24px 9px 22px; border-top-left-radius: 10px; border-bottom-left-radius: 10px; }

.tail { position: absolute; left: -11px; bottom: 0; width: 12px; height: 24px; }

.bubble h2 {
  margin-bottom: 3px;
  font-size: 28px;
  line-height: 36px;
  font-weight: 500;
  color: #5a93c3;
}

.text { font-size: 32px; line-height: 38px; white-space: pre; }
.text.strong { font-weight: 500; }
.emoji { width: 38px; height: 38px; vertical-align: -8px; }

.row { display: flex; align-items: flex-end; justify-content: space-between; gap: 16px; }
.row .text { margin-bottom: 5px; }
.tailed .row .text { margin-bottom: 7px; }

.meta {
  display: flex;
  align-items: center;
  justify-content: flex-end;
  gap: 6px;
  height: 28px;
  margin-top: 3px;
  font-size: 24px;
  line-height: 28px;
  white-space: nowrap;
  color: #a0a9b4;
}

.tailed .meta { margin-top: 7px; }
.meta time { margin-left: 8px; }
.eye { width: 28px; height: 20px; }

.share {
  display: flex;
  align-items: center;
  justify-content: center;
  flex: none;
  width: 64px;
  height: 64px;
  margin-bottom: 16px;
  padding: 0;
  border: 0;
  border-radius: 50%;
  background: rgba(66, 112, 72, .45);
}

.tailed .share { margin-bottom: 12px; }
.share svg { width: 30px; height: 26px; }

/* Message entry */
.composer {
  position: relative;
  z-index: 1;
  display: flex;
  align-items: center;
  flex: none;
  height: 99px;
  padding: 0 30px;
  background: #fff;
  box-shadow: 0 -1px 3px rgba(0, 0, 0, .25);
}

.caret { width: 4px; height: 48px; margin: 0 -3px 0 22px; background: #5a9dd4; }

.composer input {
  flex: 1;
  min-width: 0;
  padding: 0;
  border: 0;
  outline: 0;
  background: none;
  font: 36px/42px Roboto, "Liberation Sans", sans-serif;
}

.composer input::placeholder { color: #a4abb1; opacity: 1; }
.composer input ~ .icon-button + .icon-button { margin-left: 57px; }

/* System navigation */
.system-nav {
  position: relative;
  display: grid;
  grid-template-columns: repeat(3, 25%);
  justify-content: center;
  flex: none;
  height: 80px;
  background: #efefef;
}

.watermark {
  position: absolute;
  right: 7px;
  top: 18px;
  display: flex;
  align-items: center;
  gap: 3px;
  font: 300 28px/36px Lato, sans-serif;
  color: #fff;
  text-shadow: 1px 1px 0 #444, -1px -1px 0 #fff;
}
```
